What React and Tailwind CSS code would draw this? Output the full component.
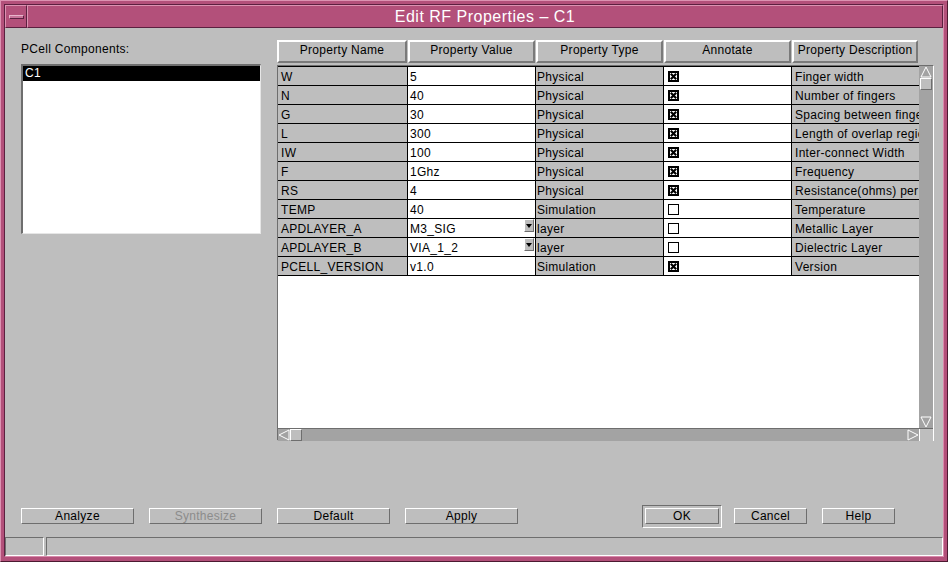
import React from "react";

const rows = [
    ["W", "5", "Physical", true, "Finger width"],
    ["N", "40", "Physical", true, "Number of fingers"],
    ["G", "30", "Physical", true, "Spacing between fingers"],
    ["L", "300", "Physical", true, "Length of overlap region"],
    ["IW", "100", "Physical", true, "Inter-connect Width"],
    ["F", "1Ghz", "Physical", true, "Frequency"],
    ["RS", "4", "Physical", true, "Resistance(ohms) per square"],
    ["TEMP", "40", "Simulation", false, "Temperature"],
    ["APDLAYER_A", "M3_SIG", "layer", false, "Metallic Layer", true],
    ["APDLAYER_B", "VIA_1_2", "layer", false, "Dielectric Layer", true],
    ["PCELL_VERSION", "v1.0", "Simulation", true, "Version"],
];

const headers = [
    ["Property Name", "w-[130px]"],
    ["Property Value", "w-[127px]"],
    ["Property Type", "w-[127px]"],
    ["Annotate", "w-[127px]"],
    ["Property Description", "w-[126px]"],
];

const CheckBox = ({ checked }) => (
    <svg width="11" height="11" viewBox="0 0 11 11" shapeRendering="crispEdges">
        <rect x="0.5" y="0.5" width="10" height="10" fill="white" stroke="black" />
        {checked && (
            <>
                <rect x="1.5" y="1.5" width="8" height="8" fill="none" stroke="black" />
                <path d="M2.8 2.8 L8.2 8.2 M8.2 2.8 L2.8 8.2" stroke="black" strokeWidth="2.2" shapeRendering="auto" />
            </>
        )}
    </svg>
);

const Arrow = ({ dir }) => {
    const pts = {
        up: "6,1 11,11 1,11",
        down: "1,1 11,1 6,11",
        left: "1,6 11,1 11,11",
        right: "1,1 11,6 1,11",
    }[dir];
    return (
        <svg width="12" height="12" viewBox="0 0 12 12">
            <polygon points={pts} fill="#a3a3a3" stroke="#ffffff" strokeWidth="1" />
        </svg>
    );
};

const Button = ({ label, width, disabled }) => (
    <div
        className={`${width} h-[16px] flex items-center justify-center border border-t-white border-l-white border-b-[#6e6e6e] border-r-[#6e6e6e] text-[12px] leading-none ${disabled ? "text-[#8c8c8c]" : "text-black"}`}
    >
        {label}
    </div>
);

export default function App() {
    return (
        <div className="w-[948px] h-[562px] bg-[#b3507a] border-t border-l border-t-[#dc93b2] border-l-[#dc93b2] border-r border-b border-r-[#4c1a31] border-b-[#4c1a31] pt-[3px] pl-[3px] pr-[3px] pb-[4px] font-['Liberation_Sans',Arial,sans-serif] overflow-hidden">
            <div className="w-[940px] h-[553px] border border-t-[#5c2040] border-l-[#5c2040] border-b-[#d989ab] border-r-[#d989ab] flex flex-col">
                {/* title bar */}
                <div className="h-[23px] flex flex-row">
                    <div className="w-[22px] h-[23px] border border-t-[#dc93b2] border-l-[#dc93b2] border-b-[#5c2040] border-r-[#5c2040] flex items-center justify-center">
                        <div className="w-[15px] h-[4px] bg-[#c8749a] border border-t-[#e9b5cb] border-l-[#e9b5cb] border-b-[#5c2040] border-r-[#5c2040]" />
                    </div>
                    <div className="flex-1 h-[23px] border border-t-[#dc93b2] border-l-[#dc93b2] border-b-[#5c2040] border-r-[#5c2040] flex items-center justify-center text-white text-[16px] tracking-[0.5px] leading-none">
                        Edit RF Properties – C1
                    </div>
                </div>

                {/* content */}
                <div className="w-[938px] h-[528px] bg-[#bebebe] flex flex-col pt-[12px] text-[12px] tracking-[0.3px] text-black">
                    <div className="h-[401px] flex flex-row pl-[16px] gap-x-[16px]">
                        {/* left list */}
                        <div className="w-[240px] flex flex-col">
                            <div className="h-[14px] leading-[14px] mt-[2px]">PCell Components:</div>
                            <div className="mt-[8px] h-[170px] bg-white border-t-2 border-l-2 border-t-[#6e6e6e] border-l-[#6e6e6e] border-b border-r border-b-[#e6e6e6] border-r-[#e6e6e6]">
                                <div className="h-[15px] bg-black text-white leading-[15px] pl-[2px]">C1</div>
                            </div>
                        </div>

                        {/* table */}
                        <div className="w-[656px] flex flex-col">
                            <div className="h-[23px] flex flex-row gap-x-[1px]">
                                {headers.map(([h, w]) => (
                                    <div
                                        key={h}
                                        className={`${w} h-[23px] flex items-center justify-center pb-[3px] border-2 border-t-white border-l-white border-b-[#7a7a7a] border-r-[#7a7a7a] whitespace-nowrap overflow-hidden`}
                                    >
                                        {h}
                                    </div>
                                ))}
                            </div>
                            <div className="mt-[2px] w-[657px] h-[376px] border border-t-[#6e6e6e] border-l-[#6e6e6e] border-b-white border-r-white flex flex-col">
                                <div className="h-[362px] flex flex-row">
                                    <div className="w-[641px] h-[362px] bg-white border-t border-t-black">
                                        {rows.map((r) => (
                                            <div key={r[0]} className="h-[19px] flex flex-row border-b border-b-black">
                                                <div className="w-[130px] bg-[#bebebe] border-r border-r-black pl-[3px] pt-[1px] leading-[18px] whitespace-nowrap overflow-hidden">
                                                    {r[0]}
                                                </div>
                                                <div className="w-[128px] bg-white border-r border-r-black pl-[2px] leading-[18px] flex flex-row justify-between items-start">
                                                    <span className="whitespace-nowrap pt-[1px]">{r[1]}</span>
                                                    {r[5] && (
                                                        <div className="w-[10px] h-[13px] mr-[1px] bg-[#bebebe] border border-t-white border-l-white border-b-[#6e6e6e] border-r-[#6e6e6e] flex items-center justify-center">
                                                            <svg width="6" height="4" viewBox="0 0 6 4">
                                                                <polygon points="0,0 6,0 3,4" fill="black" />
                                                            </svg>
                                                        </div>
                                                    )}
                                                </div>
                                                <div className="w-[128px] bg-[#bebebe] border-r border-r-black pl-[1px] pt-[1px] leading-[18px] whitespace-nowrap overflow-hidden">
                                                    {r[2]}
                                                </div>
                                                <div className="w-[128px] bg-white border-r border-r-black pl-[4px] flex items-center">
                                                    <CheckBox checked={r[3]} />
                                                </div>
                                                <div className="w-[127px] bg-[#bebebe] pl-[3px] pt-[1px] leading-[18px] whitespace-nowrap overflow-hidden">
                                                    {r[4]}
                                                </div>
                                            </div>
                                        ))}
                                    </div>
                                    {/* vertical scrollbar */}
                                    <div className="w-[14px] h-[362px] bg-[#a3a3a3] flex flex-col justify-between">
                                        <div className="flex flex-col">
                                            <div className="h-[12px] flex items-center justify-center">
                                                <Arrow dir="up" />
                                            </div>
                                            <div className="h-[12px] mx-[1px] bg-[#bebebe] border border-t-white border-l-white border-b-[#6e6e6e] border-r-[#6e6e6e]" />
                                        </div>
                                        <div className="h-[13px] flex items-center justify-center">
                                            <Arrow dir="down" />
                                        </div>
                                    </div>
                                </div>
                                {/* horizontal scrollbar */}
                                <div className="h-[13px] flex flex-row border-t border-t-[#6e6e6e]">
                                    <div className="w-[641px] bg-[#a3a3a3] flex flex-row justify-between items-center">
                                        <div className="flex flex-row items-center">
                                            <div className="w-[12px] flex items-center justify-center">
                                                <Arrow dir="left" />
                                            </div>
                                            <div className="w-[12px] h-[12px] bg-[#bebebe] border border-t-white border-l-white border-b-[#6e6e6e] border-r-[#6e6e6e]" />
                                        </div>
                                        <div className="w-[13px] flex items-center justify-center">
                                            <Arrow dir="right" />
                                        </div>
                                    </div>
                                    <div className="w-[14px] bg-[#bebebe] border-l border-l-white" />
                                </div>
                            </div>
                        </div>
                    </div>

                    {/* buttons */}
                    <div className="mt-[67px] h-[16px] flex flex-row pl-[16px]">
                        <div className="flex flex-row gap-x-[15px]">
                            <Button label="Analyze" width="w-[113px]" />
                            <Button label="Synthesize" width="w-[113px]" disabled />
                            <Button label="Default" width="w-[113px]" />
                            <Button label="Apply" width="w-[113px]" />
                        </div>
                        <div className="ml-[127px] flex flex-row gap-x-[15px]">
                            <div className="relative">
                                <span className="absolute -left-[3px] -top-[3px] -right-[3px] -bottom-[4px] border border-t-[#6e6e6e] border-l-[#6e6e6e] border-b-white border-r-white" />
                                <Button label="OK" width="w-[74px]" />
                            </div>
                            <Button label="Cancel" width="w-[73px]" />
                            <Button label="Help" width="w-[73px]" />
                        </div>
                    </div>

                    {/* status bar */}
                    <div className="mt-[13px] h-[19px] flex flex-row gap-x-[2px]">
                        <div className="w-[39px] h-[19px] border border-t-[#6e6e6e] border-l-[#6e6e6e] border-b-white border-r-white" />
                        <div className="w-[897px] h-[19px] border border-t-[#6e6e6e] border-l-[#6e6e6e] border-b-white border-r-white" />
                    </div>
                </div>
            </div>
        </div>
    );
}
